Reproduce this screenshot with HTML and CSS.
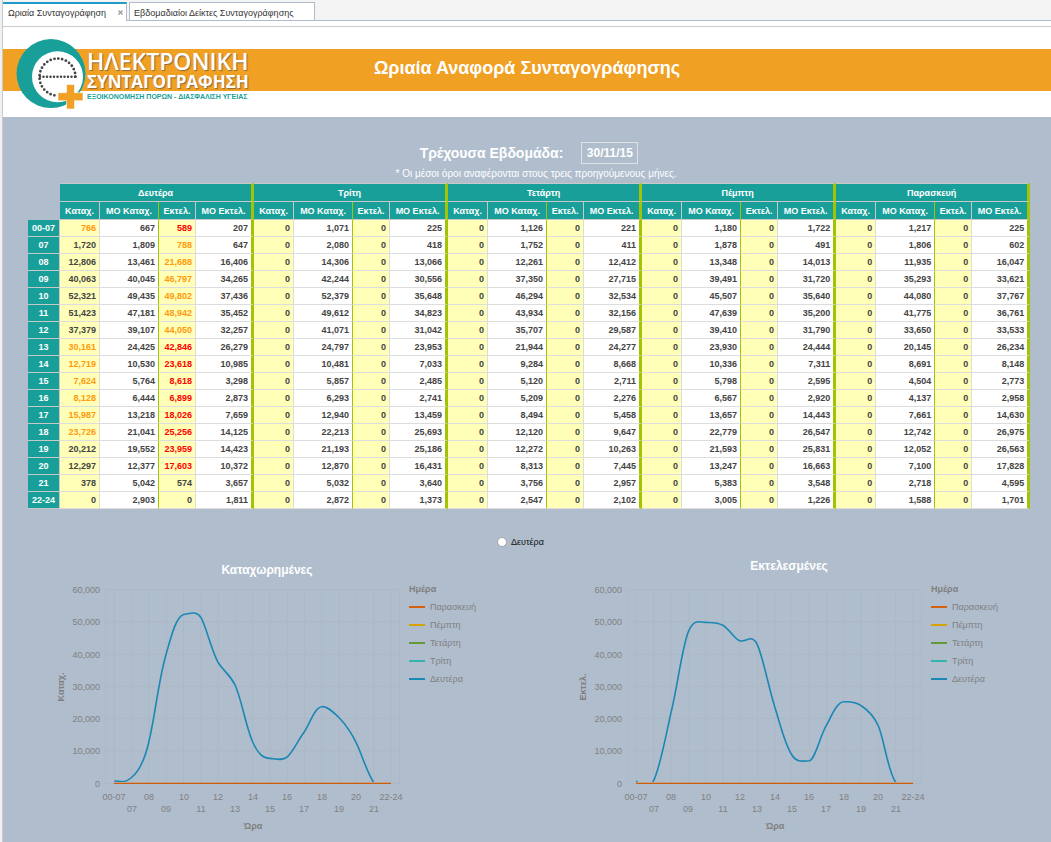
FILE: index.html
```html
<!DOCTYPE html>
<html lang="el">
<head>
<meta charset="utf-8">
<meta name="viewport" content="width=device-width, initial-scale=1">
<title>Ωριαία Συνταγογράφηση</title>
<link rel="stylesheet" href="styles.css">
</head>
<body>
<nav class="tabs">
  <div class="tab tab-active"><a href="#report">Ωριαία Συνταγογράφηση</a><button class="tab-close" type="button" aria-label="Κλείσιμο"><svg width="5" height="5" viewBox="0 0 5 5"><path d="M0.5 0.5L4.5 4.5M4.5 0.5L0.5 4.5" stroke="#999" stroke-width="1.2"/></svg></button></div>
  <div class="tab"><a href="#weekly">Εβδομαδιαίοι Δείκτες Συνταγογράφησης</a></div>
</nav>

<main class="report" id="report">
  <header class="banner">
    <div class="brand">
      <svg class="brand-mark" width="72" height="72" viewBox="15 38 72 72" aria-hidden="true">
        <circle cx="51" cy="73.600" r="34.500" fill="#189f9a"/>
        <circle cx="57.500" cy="76.700" r="25.500" fill="#fff"/>
        <path d="M75.500 76.700A18 18.500 0 1 0 56 95.500" fill="none" stroke="#444" stroke-width="2.800" stroke-linecap="round" stroke-dasharray="0 3.900"/>
        <path d="M40 76.700H76" stroke="#444" stroke-width="2.500" stroke-linecap="round" stroke-dasharray="0 3.500"/>
        <path d="M66.500 84.500h8v8.200h8.500v8h-8.500v8.300h-8v-8.300h-8.500v-8h8.500z" fill="#f0a023" stroke="#fff" stroke-width="0.600"/>
      </svg>
      <div class="brand-text">
        <span class="brand-first">ΗΛΕΚΤΡΟΝΙΚΗ</span>
        <span class="brand-second">ΣΥΝΤΑΓΟΓΡΑΦΗΣΗ</span>
        <span class="brand-tag">ΕΞΟΙΚΟΝΟΜΗΣΗ ΠΟΡΩΝ - ΔΙΑΣΦΑΛΙΣΗ ΥΓΕΙΑΣ</span>
      </div>
    </div>
    <h1>Ωριαία Αναφορά Συνταγογράφησης</h1>
  </header>

  <section class="content">
    <div class="week">
      <label for="week">Τρέχουσα Εβδομάδα:</label>
      <input id="week" type="text" value="30/11/15">
    </div>
    <p class="note">* Οι μέσοι όροι αναφέρονται στους τρεις προηγούμενους μήνες.</p>

    <table class="hours">
      <colgroup><col class="c-hour"></colgroup>
      <colgroup><col class="c-reg"><col class="c-regavg"><col class="c-exe"><col class="c-exeavg"></colgroup>
      <colgroup><col class="c-reg"><col class="c-regavg"><col class="c-exe"><col class="c-exeavg"></colgroup>
      <colgroup><col class="c-reg"><col class="c-regavg"><col class="c-exe"><col class="c-exeavg"></colgroup>
      <colgroup><col class="c-reg"><col class="c-regavg"><col class="c-exe"><col class="c-exeavg"></colgroup>
      <colgroup><col class="c-reg"><col class="c-regavg"><col class="c-exe"><col class="c-exeavg"></colgroup>
      <thead>
        <tr class="days"><td class="corner" rowspan="2"></td><th colspan="4">Δευτέρα</th><th colspan="4">Τρίτη</th><th colspan="4">Τετάρτη</th><th colspan="4">Πέμπτη</th><th colspan="4">Παρασκευή</th></tr>
        <tr class="measures"><th>Καταχ.<th>ΜΟ Καταχ.<th>Εκτελ.<th>ΜΟ Εκτελ.<th>Καταχ.<th>ΜΟ Καταχ.<th>Εκτελ.<th>ΜΟ Εκτελ.<th>Καταχ.<th>ΜΟ Καταχ.<th>Εκτελ.<th>ΜΟ Εκτελ.<th>Καταχ.<th>ΜΟ Καταχ.<th>Εκτελ.<th>ΜΟ Εκτελ.<th>Καταχ.<th>ΜΟ Καταχ.<th>Εκτελ.<th>ΜΟ Εκτελ.</tr>
      </thead>
      <tbody>
        <tr><th>00-07<td class="warn">766<td>667<td class="high">589<td>207<td>0<td>1,071<td>0<td>225<td>0<td>1,126<td>0<td>221<td>0<td>1,180<td>0<td>1,722<td>0<td>1,217<td>0<td>225
        <tr><th>07<td>1,720<td>1,809<td class="warn">788<td>647<td>0<td>2,080<td>0<td>418<td>0<td>1,752<td>0<td>411<td>0<td>1,878<td>0<td>491<td>0<td>1,806<td>0<td>602
        <tr><th>08<td>12,806<td>13,461<td class="warn">21,688<td>16,406<td>0<td>14,306<td>0<td>13,066<td>0<td>12,261<td>0<td>12,412<td>0<td>13,348<td>0<td>14,013<td>0<td>11,935<td>0<td>16,047
        <tr><th>09<td>40,063<td>40,045<td class="warn">46,797<td>34,265<td>0<td>42,244<td>0<td>30,556<td>0<td>37,350<td>0<td>27,715<td>0<td>39,491<td>0<td>31,720<td>0<td>35,293<td>0<td>33,621
        <tr><th>10<td>52,321<td>49,435<td class="warn">49,802<td>37,436<td>0<td>52,379<td>0<td>35,648<td>0<td>46,294<td>0<td>32,534<td>0<td>45,507<td>0<td>35,640<td>0<td>44,080<td>0<td>37,767
        <tr><th>11<td>51,423<td>47,181<td class="warn">48,942<td>35,452<td>0<td>49,612<td>0<td>34,823<td>0<td>43,934<td>0<td>32,156<td>0<td>47,639<td>0<td>35,200<td>0<td>41,775<td>0<td>36,761
        <tr><th>12<td>37,379<td>39,107<td class="warn">44,050<td>32,257<td>0<td>41,071<td>0<td>31,042<td>0<td>35,707<td>0<td>29,587<td>0<td>39,410<td>0<td>31,790<td>0<td>33,650<td>0<td>33,533
        <tr><th>13<td class="warn">30,161<td>24,425<td class="high">42,846<td>26,279<td>0<td>24,797<td>0<td>23,953<td>0<td>21,944<td>0<td>24,277<td>0<td>23,930<td>0<td>24,444<td>0<td>20,145<td>0<td>26,234
        <tr><th>14<td class="warn">12,719<td>10,530<td class="high">23,618<td>10,985<td>0<td>10,481<td>0<td>7,033<td>0<td>9,284<td>0<td>8,668<td>0<td>10,336<td>0<td>7,311<td>0<td>8,691<td>0<td>8,148
        <tr><th>15<td class="warn">7,624<td>5,764<td class="high">8,618<td>3,298<td>0<td>5,857<td>0<td>2,485<td>0<td>5,120<td>0<td>2,711<td>0<td>5,798<td>0<td>2,595<td>0<td>4,504<td>0<td>2,773
        <tr><th>16<td class="warn">8,128<td>6,444<td class="high">6,899<td>2,873<td>0<td>6,293<td>0<td>2,741<td>0<td>5,209<td>0<td>2,276<td>0<td>6,567<td>0<td>2,920<td>0<td>4,137<td>0<td>2,958
        <tr><th>17<td class="warn">15,987<td>13,218<td class="high">18,026<td>7,659<td>0<td>12,940<td>0<td>13,459<td>0<td>8,494<td>0<td>5,458<td>0<td>13,657<td>0<td>14,443<td>0<td>7,661<td>0<td>14,630
        <tr><th>18<td class="warn">23,726<td>21,041<td class="high">25,256<td>14,125<td>0<td>22,213<td>0<td>25,693<td>0<td>12,120<td>0<td>9,647<td>0<td>22,779<td>0<td>26,547<td>0<td>12,742<td>0<td>26,975
        <tr><th>19<td>20,212<td>19,552<td class="high">23,959<td>14,423<td>0<td>21,193<td>0<td>25,186<td>0<td>12,272<td>0<td>10,263<td>0<td>21,593<td>0<td>25,831<td>0<td>12,052<td>0<td>26,563
        <tr><th>20<td>12,297<td>12,377<td class="high">17,603<td>10,372<td>0<td>12,870<td>0<td>16,431<td>0<td>8,313<td>0<td>7,445<td>0<td>13,247<td>0<td>16,663<td>0<td>7,100<td>0<td>17,828
        <tr><th>21<td>378<td>5,042<td>574<td>3,657<td>0<td>5,032<td>0<td>3,640<td>0<td>3,756<td>0<td>2,957<td>0<td>5,383<td>0<td>3,548<td>0<td>2,718<td>0<td>4,595
        <tr><th>22-24<td>0<td>2,903<td>0<td>1,811<td>0<td>2,872<td>0<td>1,373<td>0<td>2,547<td>0<td>2,102<td>0<td>3,005<td>0<td>1,226<td>0<td>1,588<td>0<td>1,701
      </tbody>
    </table>

    <div class="day-choice">
      <input type="radio" id="day-mon" name="day">
      <label for="day-mon">Δευτέρα</label>
    </div>

    <div class="charts">
      <figure class="chart">
        <figcaption>Καταχωρημένες</figcaption>
        <div class="chart-row">
          <svg class="plot" width="350" height="252" viewBox="0 0 350 252">
            <g class="grid">
              <path d="M52.500 6.500H346.500M52.500 39H346.500M52.500 71.500H346.500M52.500 103.500H346.500M52.500 135.500H346.500M52.500 168H346.500M52.500 200.500H346.500"/>
              <path d="M52.500 6.500V200.500M61.300 6.500V200.500M78.600 6.500V200.500M95.900 6.500V200.500M113.200 6.500V200.500M130.500 6.500V200.500M147.800 6.500V200.500M165.100 6.500V200.500M182.400 6.500V200.500M199.700 6.500V200.500M217 6.500V200.500M234.300 6.500V200.500M251.600 6.500V200.500M268.900 6.500V200.500M286.200 6.500V200.500M303.500 6.500V200.500M320.800 6.500V200.500M338 6.500V200.500M346.500 6.500V200.500"/>
            </g>
            <g class="ticks ticks-y">
              <text x="47" y="10">60,000</text><text x="47" y="42">50,000</text><text x="47" y="75">40,000</text><text x="47" y="107">30,000</text><text x="47" y="139">20,000</text><text x="47" y="171">10,000</text><text x="47" y="204">0</text>
            </g>
            <g class="ticks ticks-x">
              <text x="61" y="217">00-07</text><text x="96" y="217">08</text><text x="131" y="217">10</text><text x="165" y="217">12</text><text x="200" y="217">14</text><text x="234" y="217">16</text><text x="269" y="217">18</text><text x="303" y="217">20</text><text x="338" y="217">22-24</text>
              <text x="79" y="229">07</text><text x="113" y="229">09</text><text x="148" y="229">11</text><text x="182" y="229">13</text><text x="217" y="229">15</text><text x="251" y="229">17</text><text x="286" y="229">19</text><text x="321" y="229">21</text>
            </g>
            <text class="axis-name" x="200" y="246">Ώρα</text>
            <text class="axis-name" transform="translate(11 104) rotate(-90)">Καταχ.</text>
            <path class="curve" d="M61.300 198C67 198 71 201 78.600 194.500C84 190 91 180 95.900 158.700C103 128 105 100 113.200 70.800C118 54 123 34 130.500 31.500C136 31 143 27 147.800 34.200C153 43 158 66 165.100 79.500C171 89 177 91 182.400 102.700C189 118 193 144 199.700 159C205 171 210 175 217 175.400C223 176 229 178 234.300 173.800C240 169 245 157 251.600 148.400C257 140 262 124 268.900 123.700C275 123 281 130 286.200 134.800C293 142 299 151 303.500 160.300C308 169 314 190 320.800 199.500"/>
            <path class="zero-top" d="M61 199.500H338"/><path class="zero" d="M61 200.500H338"/>
          </svg>
          <div class="legend">
            <h3>Ημέρα</h3>
            <ul><li class="fri">Παρασκευή</li><li class="thu">Πέμπτη</li><li class="wed">Τετάρτη</li><li class="tue">Τρίτη</li><li class="mon">Δευτέρα</li></ul>
          </div>
        </div>
      </figure>

      <figure class="chart chart-exe">
        <figcaption>Εκτελεσμένες</figcaption>
        <div class="chart-row">
          <svg class="plot" width="350" height="252" viewBox="0 0 350 252">
            <g class="grid">
              <path d="M52.500 6.500H346.500M52.500 39H346.500M52.500 71.500H346.500M52.500 103.500H346.500M52.500 135.500H346.500M52.500 168H346.500M52.500 200.500H346.500"/>
              <path d="M52.500 6.500V200.500M61.300 6.500V200.500M78.600 6.500V200.500M95.900 6.500V200.500M113.200 6.500V200.500M130.500 6.500V200.500M147.800 6.500V200.500M165.100 6.500V200.500M182.400 6.500V200.500M199.700 6.500V200.500M217 6.500V200.500M234.300 6.500V200.500M251.600 6.500V200.500M268.900 6.500V200.500M286.200 6.500V200.500M303.500 6.500V200.500M320.800 6.500V200.500M338 6.500V200.500M346.500 6.500V200.500"/>
            </g>
            <g class="ticks ticks-y">
              <text x="47" y="10">60,000</text><text x="47" y="42">50,000</text><text x="47" y="75">40,000</text><text x="47" y="107">30,000</text><text x="47" y="139">20,000</text><text x="47" y="171">10,000</text><text x="47" y="204">0</text>
            </g>
            <g class="ticks ticks-x">
              <text x="61" y="217">00-07</text><text x="96" y="217">08</text><text x="131" y="217">10</text><text x="165" y="217">12</text><text x="200" y="217">14</text><text x="234" y="217">16</text><text x="269" y="217">18</text><text x="303" y="217">20</text><text x="338" y="217">22-24</text>
              <text x="79" y="229">07</text><text x="113" y="229">09</text><text x="148" y="229">11</text><text x="182" y="229">13</text><text x="217" y="229">15</text><text x="251" y="229">17</text><text x="286" y="229">19</text><text x="321" y="229">21</text>
            </g>
            <text class="axis-name" x="200" y="246">Ώρα</text>
            <text class="axis-name" transform="translate(11 104) rotate(-90)">Εκτελ.</text>
            <path class="curve" d="M61.300 198L62.500 199.500M77.600 199.500C84 190 91 152 95.900 130C102 106 107 65 113.200 49.100C119 35 124 39.400 130.500 39.400C137 39.600 142 39 147.800 42.200C154 45.500 160 57 165.100 57.900C171 59.500 177 50 182.400 61.800C188 74 193 102 199.700 123.800C206 144 210 162 217 172.200C222 180 228 178 234.300 177.800C240 177 245 153 251.600 141.900C257 132 262 119 268.900 118.800C276 118.500 281 119 286.200 122.700C293 127 299 133 303.500 143.200C309 156 313 189 320.800 199.500"/>
            <path class="zero-top" d="M61 199.500H338"/><path class="zero" d="M61 200.500H338"/>
          </svg>
          <div class="legend">
            <h3>Ημέρα</h3>
            <ul><li class="fri">Παρασκευή</li><li class="thu">Πέμπτη</li><li class="wed">Τετάρτη</li><li class="tue">Τρίτη</li><li class="mon">Δευτέρα</li></ul>
          </div>
        </div>
      </figure>
    </div>
  </section>
</main>
</body>
</html>
```
FILE: styles.css
```css
* { box-sizing: border-box; }

html { background: #f0f0f0; }

body {
  margin: 0 0 0 2px;
  min-height: 100vh;
  display: flex;
  flex-direction: column;
  border-left: 1px solid #c8cacd;
  background: #fff;
  font-family: "Liberation Sans", Arial, sans-serif;
}

/* Tab strip */
.tabs {
  display: flex;
  gap: 2px;
  height: 21px;
  padding-top: 2px;
  background: #f4f4f4;
  border-bottom: 1px solid #b0bccd;
  font-size: 9px;
}
.tab {
  display: flex;
  align-items: center;
  gap: 12px;
  height: 19px;
  padding: 2px 20px 0 4px;
  background: #fff;
  border: 1px solid #b0bccd;
}
.tab a { color: #333; text-decoration: none; white-space: nowrap; }
.tab-active {
  padding: 0 3px 0 5px;
  border-width: 2px 1px 0 0;
  border-top-color: #1f9ac9;
}
.tab-close { display: flex; padding: 0; border: 0; background: none; }

/* Banner */
.report {
  flex: 1;
  display: flex;
  flex-direction: column;
  margin-top: 5px;
  border-top: 1px solid #ccc;
}
.banner {
  display: grid;
  grid-template-columns: 1fr auto 1fr;
  height: 90px;
  padding: 0 12px;
  background: linear-gradient(#fff 22px, #f0a023 22px, #f0a023 64px, #fff 64px);
}
.brand { display: flex; align-items: flex-start; padding-top: 11px; }
.brand-mark { flex: none; }
.brand-text {
  display: flex;
  flex-direction: column;
  padding-top: 11px;
  color: #fff;
  font-family: "Open Sans", "Noto Sans", sans-serif;
  font-weight: 600;
  white-space: nowrap;
}
.brand-first { font-size: 23px; line-height: 24px; text-shadow: 1px 1px 1px #8a6a3a; }
.brand-second { font-size: 17px; font-weight: 700; line-height: 18px; text-shadow: 1px 1px 1px #8a6a3a; }
.brand-tag { color: #189f9a; font-family: "Liberation Sans", Arial, sans-serif; font-size: 7px; font-weight: 700; line-height: 12px; }
h1 {
  margin: 0;
  padding-top: 30px;
  color: #fff;
  font-size: 18px;
  line-height: 22px;
}

/* Report body */
.content {
  flex: 1;
  padding-top: 25px;
  background: #b0bdcd;
}
.week {
  display: flex;
  justify-content: center;
  align-items: center;
  gap: 18px;
  padding-left: 4px;
  color: #fff;
  font-size: 14px;
  font-weight: 700;
}
.week input {
  width: 57px;
  height: 22px;
  padding: 0;
  border: 1px solid #dde2e9;
  background: none;
  color: #fff;
  font: 700 12px "Liberation Sans", Arial, sans-serif;
  text-align: center;
}
.note {
  margin: 4px 0 3px;
  padding-left: 18px;
  color: #fff;
  font-size: 10px;
  line-height: 12px;
  text-align: center;
}

/* Hourly table */
.hours {
  width: calc(100% - 46px);
  margin-left: 25px;
  table-layout: fixed;
  border-collapse: separate;
  border-spacing: 0;
  color: #444;
  font-size: 9px;
  font-weight: 700;
  line-height: 12px;
}
.c-hour { width: 32px; }
.c-reg { width: 40px; }
.c-regavg { width: 59px; }
.c-exe { width: 37px; }
.c-exeavg { width: 58px; }
.hours th, .hours td { padding: 0; white-space: nowrap; }
.hours th {
  background: #189f9a;
  border-right: 1px solid #c8c8c8;
  border-bottom: 1px solid #c8c8c8;
  color: #fff;
  text-align: center;
}
.hours thead th { height: 18px; }
.hours .days th { height: 19px; border-top: 1px solid #c8c8c8; border-right: 3px solid #a2c404; }
.hours tbody th { height: 17px; }
.hours tbody td {
  height: 17px;
  padding-right: 3px;
  background: #fff;
  border-right: 1px solid #ddd;
  border-bottom: 1px solid #ddd;
  text-align: right;
}
.hours tbody td:nth-child(even) { background: #ffffb8; }
.hours tbody td:nth-child(4n + 3), .hours .measures th:nth-child(4n + 2) { border-right-color: #a2c404; }
.hours tbody td:nth-child(4n + 1), .hours .measures th:nth-child(4n) { border-right: 3px solid #a2c404; }
.hours .warn { color: #ff9a0c; }
.hours .high { color: #f00; }

/* Day selector */
.day-choice {
  display: flex;
  justify-content: center;
  align-items: center;
  gap: 4px;
  padding: 27px 13px 0 0;
  color: #111;
  font-size: 9px;
  line-height: 12px;
}
.day-choice input {
  appearance: none;
  width: 10px;
  height: 10px;
  margin: 0;
  border: 1px solid #a5a5a5;
  border-radius: 50%;
  background: #fff;
}

/* Charts */
.charts {
  display: grid;
  grid-template-columns: 1fr 1fr;
  padding: 10px 4px 0 0;
}
.chart { margin: 0; padding-left: 50px; }
.chart figcaption {
  width: 428px;
  padding-top: 4px;
  height: 25px;
  color: #fff;
  font-size: 12px;
  font-weight: 700;
  line-height: 16px;
  text-align: center;
}
.chart-exe figcaption { padding-top: 0; }
.chart-row { display: flex; gap: 6px; }
.plot { flex: none; }
.grid { fill: none; stroke: #a9b8c2; stroke-width: 1; opacity: 0.6; }
.ticks { fill: #808080; font-size: 9px; }
.ticks-y { text-anchor: end; }
.ticks-x { text-anchor: middle; }
.axis-name { fill: #808080; font-size: 9px; font-weight: 700; text-anchor: middle; }
.curve { fill: none; stroke: #1b87b4; stroke-width: 1.600; }
.zero-top { stroke: #c2a283; }
.zero { stroke: #c95d12; }
.legend { color: #808080; font-size: 9px; }
.legend h3 { margin: 0; font-size: 9px; line-height: 12px; }
.legend ul { margin: 3px 0 0; padding: 0; list-style: none; }
.legend li { display: flex; align-items: center; gap: 5px; line-height: 18px; }
.legend li::before { content: ""; width: 16px; height: 2px; background: currentColor; }
.fri::before { color: #d2600f; }
.thu::before { color: #d6a204; }
.wed::before { color: #639a35; }
.tue::before { color: #35b3ac; }
.mon::before { color: #1b87b4; }
```
